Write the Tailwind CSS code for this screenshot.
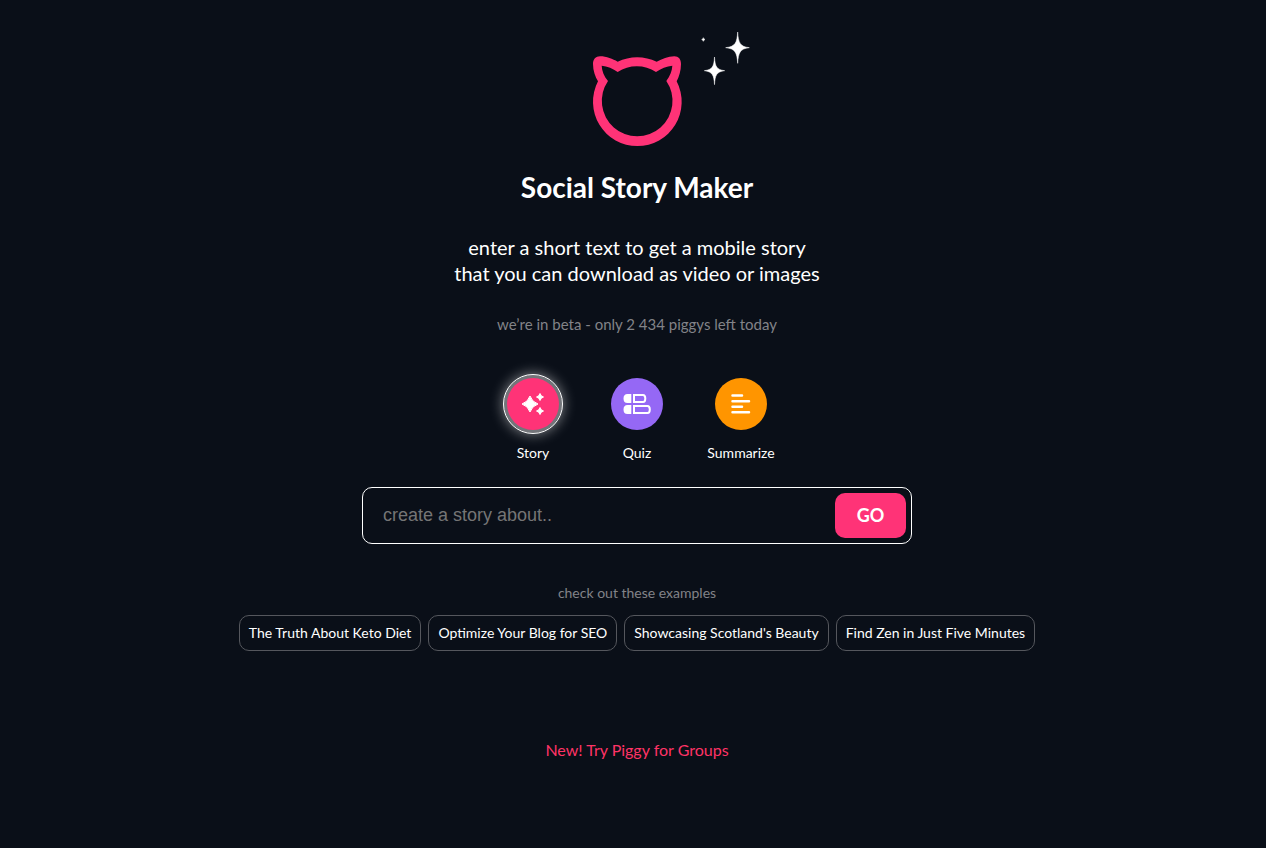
<!DOCTYPE html>
<html lang="en">
<head>
  <meta charset="UTF-8" />
  <meta name="viewport" content="width=device-width, initial-scale=1" />
  <title>Piggy - Social Story Maker</title>
  <script src="https://cdn.jsdelivr.net/npm/@tailwindcss/browser@4"></script>
</head>
<body class="bg-[#0a0f18] text-white font-['Lato',sans-serif] min-h-screen">
  <main class="flex flex-col items-center pt-[30px] pl-2 text-center">

    <!-- Logo -->
    <svg class="w-[228px] h-[120px]" viewBox="-171 30 684 360" role="img" aria-label="Piggy">
      <path fill="#ff3377" fill-rule="evenodd" d="M54 184C46 170 39 153 39 132C39 118 47 109 60 109C80 109 98 117 113 125A133 133 0 0 1 230 125C246 117 264 109 283 109C296 109 303 118 303 132C303 153 297 170 290 184A133 133 0 1 1 54 184ZM84 183C72 170 66 153 65 137C82 138 99 146 113 156A106 106 0 0 1 228 156C243 146 260 138 277 137C276 153 270 168 259 183A106 106 0 1 1 84 183Z" />
      <g fill="#fff" stroke="#fff" stroke-width="1.500">
        <path d="M473 36C475 68 480 80 508 83C480 86 475 98 473 130C471 98 466 86 437 83C466 80 471 68 473 36Z" />
        <path d="M403.500 111C405 140 410 149 434 152C410 155 405 165 403.500 194C402 165 397 155 373 152C397 149 402 140 403.500 111Z" />
        <path d="M370 53Q371 57 375 58.500Q371 60 370 64Q369 60 365 58.500Q369 57 370 53Z" />
      </g>
    </svg>

    <h1 class="mt-[19px] text-[28px] leading-9 font-bold">Social Story Maker</h1>

    <p class="mt-[29px] text-[20px] leading-[26px]">enter a short text to get a mobile story<br />that you can download as video or images</p>
    <p class="mt-[28px] text-[15px] leading-5 text-[#828388]">we’re in beta - only 2 434 piggys left today</p>

    <!-- Modes -->
    <div class="mt-11 flex gap-[52px] text-[14px] leading-5">
      <button class="w-[52px] flex flex-col items-center gap-[13px]">
        <span class="size-[52px] shrink-0 rounded-full bg-[#ff3377] flex items-center justify-center outline outline-white outline-offset-3 shadow-[0_0_0_3px_#73757a,0_0_13px_4px_rgba(255,255,255,0.5)]">
          <svg class="size-[26px]" viewBox="0 0 26 26" fill="#fff" stroke="#fff" stroke-linejoin="round">
            <path d="M10 5Q12 11 18 13Q12 15 10 21Q8 15 2 13Q8 11 10 5Z" />
            <path d="M20 2.500Q20.800 5.200 23.500 6Q20.800 6.800 20 9.500Q19.200 6.800 16.500 6Q19.200 5.200 20 2.500Z" />
            <path d="M20 16.500Q20.800 19.200 23.500 20Q20.800 20.800 20 23.500Q19.200 20.800 16.500 20Q19.200 19.200 20 16.500Z" />
          </svg>
        </span>
        <span>Story</span>
      </button>
      <button class="w-[52px] flex flex-col items-center gap-[13px]">
        <span class="size-[52px] shrink-0 rounded-full bg-[#9568f5] flex items-center justify-center">
          <svg class="w-7 h-[22px]" viewBox="0 0 28 22" fill="#fff">
            <path d="M8.300 1v9H4.500Q.5 10 .5 5.500Q.5 1 4.500 1ZM8.300 12v9H4.500Q.5 21 .5 16.500Q.5 12 4.500 12Z" />
            <path d="M11 2h9q2.300 0 2.300 3.500q0 3.500-2.300 3.500h-9zM11 13h13.500q2.300 0 2.300 3.500q0 3.500-2.300 3.500h-13.500z" fill="none" stroke="#fff" stroke-width="2" />
          </svg>
        </span>
        <span>Quiz</span>
      </button>
      <button class="w-[52px] flex flex-col items-center gap-[13px]">
        <span class="size-[52px] shrink-0 rounded-full bg-[#ff9500] flex items-center justify-center">
          <svg class="w-5 h-[22px]" viewBox="0 0 20 22" stroke="#fff" stroke-width="2.500" stroke-linecap="round">
            <path d="M1.500 2.500h9.500M1.500 8.200h16.500M1.500 13.700h9.500M1.500 19.200h16.500" />
          </svg>
        </span>
        <span>Summarize</span>
      </button>
    </div>

    <!-- Prompt -->
    <form class="mt-6 w-full max-w-[550px] h-[57px] flex items-stretch rounded-[10px] border border-white p-[5px]">
      <input type="text" aria-label="Story topic" placeholder="create a story about.." class="min-w-0 flex-1 bg-transparent pl-[15px] pb-[1px] font-['Liberation_Sans',sans-serif] text-[18px] placeholder:text-[#757575] outline-none" />
      <button type="button" class="w-[71px] rounded-[10px] bg-[#ff3377] text-[18px] font-bold">GO</button>
    </form>

    <!-- Examples -->
    <p class="mt-[39px] text-[14px] leading-5 text-[#828388]">check out these examples</p>
    <div class="mt-3 flex flex-wrap justify-center gap-[7px] text-[14px] leading-5">
      <button class="h-9 px-[9px] rounded-[10px] border border-[#55575d]">The Truth About Keto Diet</button>
      <button class="h-9 px-[9px] rounded-[10px] border border-[#55575d]">Optimize Your Blog for SEO</button>
      <button class="h-9 px-[9px] rounded-[10px] border border-[#55575d]">Showcasing Scotland's Beauty</button>
      <button class="h-9 px-[9px] rounded-[10px] border border-[#55575d]">Find Zen in Just Five Minutes</button>
    </div>

    <a href="#" class="mt-[88px] mb-10 text-[16px] leading-[22px] text-[#ff3366]">New! Try Piggy for Groups</a>
  </main>
</body>
</html>
